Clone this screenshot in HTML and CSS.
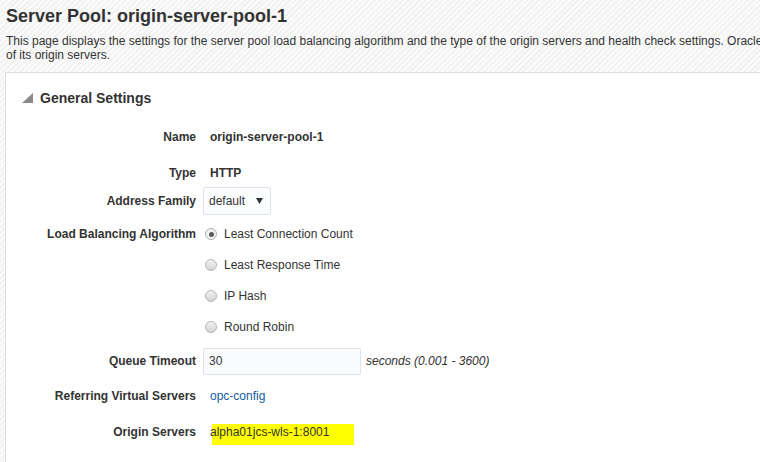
FILE: index.html
```html
<!DOCTYPE html>
<html>
<head>
<meta charset="utf-8">
<link rel="stylesheet" href="styles.css">
</head>
<body>
<div class="page">
  <div class="page-head">
    <h1 class="title">Server Pool: origin-server-pool-1</h1>
    <p class="desc">This page displays the settings for the server pool load balancing algorithm and the type of the origin servers and health check settings. Oracle Traffic Director monitors the health<br>of its origin servers.</p>
  </div>
  <section class="panel">
    <div class="panel-head">
      <svg class="disclosure" width="11" height="10" viewBox="0 0 11 10"><polygon points="11,0 11,10 0,10" fill="#8a8a8a"/></svg>
      <h2 class="panel-title">General Settings</h2>
    </div>
    <div class="form">
      <div class="lbl">Name</div>
      <div class="val val-text strong">origin-server-pool-1</div>

      <div class="lbl">Type</div>
      <div class="val val-text strong">HTTP</div>

      <div class="lbl">Address Family</div>
      <div class="val">
        <div class="select"><span>default</span><svg width="7" height="6" viewBox="0 0 7 6"><polygon points="0,0 7,0 3.5,6" fill="#333"/></svg></div>
      </div>

      <div class="lbl">Load Balancing Algorithm</div>
      <div class="val"><span class="radio checked"></span><span class="radio-label">Least Connection Count</span></div>

      <div class="lbl"></div>
      <div class="val"><span class="radio"></span><span class="radio-label">Least Response Time</span></div>

      <div class="lbl"></div>
      <div class="val"><span class="radio"></span><span class="radio-label">IP Hash</span></div>

      <div class="lbl"></div>
      <div class="val"><span class="radio"></span><span class="radio-label">Round Robin</span></div>

      <div class="lbl">Queue Timeout</div>
      <div class="val"><div class="input">30</div><span class="hint">seconds (0.001 - 3600)</span></div>

      <div class="lbl">Referring Virtual Servers</div>
      <div class="val val-text"><a class="link">opc-config</a></div>

      <div class="lbl">Origin Servers</div>
      <div class="val val-top"><span class="highlight">alpha01jcs-wls-1:8001</span></div>
    </div>
  </section>
</div>
</body>
</html>
```
FILE: styles.css
```css
html { overflow: hidden; }
body {
  margin: 0;
  font-family: "Liberation Sans", Arial, sans-serif;
  font-size: 12px;
  color: #333;
  background: #f6f6f6 repeating-linear-gradient(135deg, #f3f3f3 0 2px, #fbfbfb 2px 4px);
  height: 462px;
  overflow: hidden;
}
.page { width: 760px; }
.page-head { padding: 5px 0 0 6px; }
.title {
  margin: 0;
  font-size: 18px;
  line-height: 22px;
  font-weight: bold;
  color: #333;
}
.desc {
  margin: 7px 0 0;
  font-size: 12px;
  line-height: 14px;
  white-space: nowrap;
  overflow: hidden;
  color: #333;
}
.panel {
  margin: 10px 0 0 5px;
  border-top: 1px solid #d6dfe6;
  border-left: 1px solid #d6dfe6;
  background: #fff;
  height: 389px;
}
.panel-head {
  display: flex;
  align-items: center;
  gap: 7px;
  height: 20px;
  padding: 15px 0 0 16px;
}
.disclosure { display: block; }
.panel-title {
  margin: 0;
  font-size: 14px;
  font-weight: bold;
  color: #333;
}
.form {
  margin-top: 19px;
  display: grid;
  grid-template-columns: 190px 1fr;
  column-gap: 7px;
  grid-template-rows: 36px 28px 33px 31px 31px 31px 34px 35px 36px 24px;
  align-items: start;
}
.lbl {
  height: 20px;
  line-height: 20px;
  text-align: right;
  font-weight: bold;
  color: #333;
  white-space: nowrap;
}
.val {
  height: 20px;
  display: flex;
  align-items: center;
  white-space: nowrap;
}
.val-text { padding-left: 7px; }
.val-top { align-items: flex-start; }
.strong { font-weight: bold; }
.select {
  flex: none;
  box-sizing: border-box;
  width: 68px;
  height: 28px;
  border: 1px solid #dfe3e8;
  border-radius: 2px;
  background: #fcfdfe;
  display: flex;
  align-items: center;
  justify-content: space-between;
  padding: 0 7px 0 5px;
}
.select svg { display: block; }
.radio {
  flex: none;
  box-sizing: border-box;
  width: 12px;
  height: 12px;
  margin-left: 2px;
  border-radius: 50%;
  border: 1px solid #b5b5b5;
  background: linear-gradient(#f2f2f2, #d4d4d4);
  display: flex;
  align-items: center;
  justify-content: center;
}
.radio.checked {
  background: #f1f1f1;
  border-color: #b0b0b0;
}
.radio.checked::after {
  content: "";
  width: 5px;
  height: 5px;
  border-radius: 50%;
  background: #5a5a5a;
}
.radio-label { margin-left: 7px; color: #333; }
.input {
  flex: none;
  box-sizing: border-box;
  width: 158px;
  height: 27px;
  line-height: 25px;
  border: 1px solid #dfe3e8;
  border-radius: 2px;
  background: #fafbfd;
  padding-left: 5px;
  color: #333;
}
.hint {
  margin-left: 5px;
  font-style: italic;
  color: #333;
}
.link { color: #145c9e; text-decoration: none; }
.highlight {
  display: inline-block;
  box-sizing: border-box;
  margin: 2px 0 0 9px;
  width: 142px;
  height: 21px;
  line-height: 16px;
  text-indent: -2px;
  background: #ffff00;
  color: #333;
}
```
